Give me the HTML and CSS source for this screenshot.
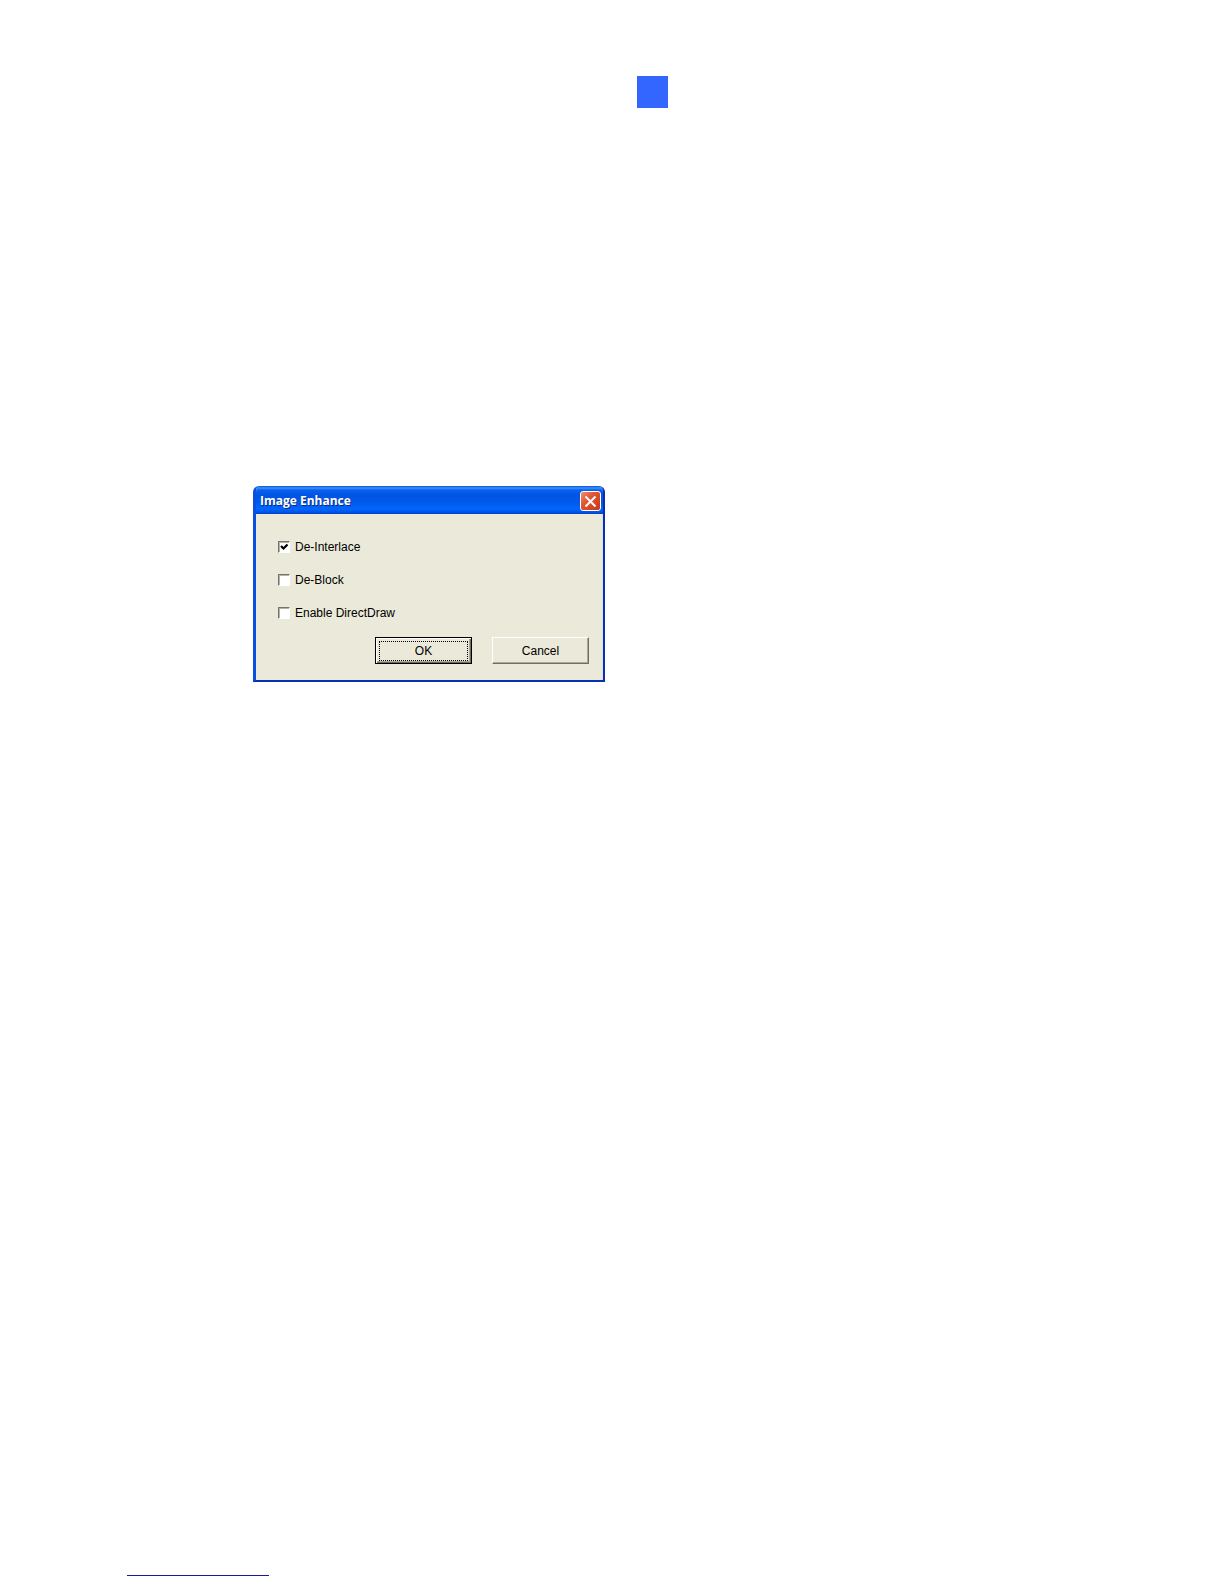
FILE: index.html
```html
<!DOCTYPE html>
<html lang="en">
<head>
<meta charset="utf-8">
<title>Image Enhance</title>
<link rel="stylesheet" href="styles.css">
</head>
<body>
<div class="page">
  <header class="page-header"><span class="page-marker"></span></header>
  <main class="content">
    <form class="dialog" role="dialog" aria-labelledby="dialog-title">
      <div class="title-bar">
        <h1 class="title" id="dialog-title">Image Enhance</h1>
        <button class="close" type="button" aria-label="Close">
          <svg width="13" height="13" viewBox="0 0 13 13" aria-hidden="true"><path d="M1.500 1.500L11.500 11.500M11.500 1.500L1.500 11.500" fill="none" stroke="#fff" stroke-width="2"/></svg>
        </button>
      </div>
      <div class="dialog-body">
        <div class="options">
          <label class="option"><input class="check" type="checkbox" checked>De-Interlace</label>
          <label class="option"><input class="check" type="checkbox">De-Block</label>
          <label class="option"><input class="check" type="checkbox">Enable DirectDraw</label>
        </div>
        <div class="actions">
          <button class="button button-default" type="button"><span class="focus-ring">OK</span></button>
          <button class="button" type="button">Cancel</button>
        </div>
      </div>
    </form>
  </main>
  <footer class="page-footer"><hr class="note-rule"></footer>
</div>
</body>
</html>
```

FILE: styles.css
```css
* {
  box-sizing: border-box;
}

body {
  margin: 0;
  background: #fff;
  color: #000;
  font: 12px/16px "Liberation Sans", Arial, sans-serif;
}

.page {
  display: flex;
  flex-direction: column;
  min-height: 100vh;
  padding: 76px 46px 8px 127px;
}

.page-header {
  display: flex;
  justify-content: center;
}

.page-marker {
  width: 31px;
  height: 32px;
  background: #36f;
}

.content {
  flex: 1;
  padding: 378px 0 0 126px;
}

.dialog {
  width: 352px;
  max-width: 100%;
  border: solid;
  border-width: 0 2px 2px 3px;
  border-color: #0a3cc8 #0830a8 #0830b0 #0a4fe0;
  border-radius: 6px 6px 0 0;
  background: #ebe9d9;
  overflow: hidden;
}

.title-bar {
  display: flex;
  align-items: center;
  justify-content: space-between;
  height: 28px;
  margin: 0 -2px 0 -3px;
  padding: 2px 4px 0 7px;
  background: linear-gradient(#0a50d0 0, #3c94ff 2px, #0a60ee 4px, #0054e3 9px, #0058ea 16px, #0066ff 23px, #005cf0 25px, #0040c8 28px);
}

.title {
  margin: 0;
  color: #fff;
  font: 700 12px/20px "Open Sans", "Noto Sans", sans-serif;
  text-shadow: 1px 1px 0 #0a2c80;
}

.close {
  display: flex;
  align-items: center;
  justify-content: center;
  width: 21px;
  height: 20px;
  padding: 0;
  border: 1px solid #fff;
  border-radius: 3px;
  background: linear-gradient(135deg, #eb9077, #e25430 40%, #c83a14);
}

.dialog-body {
  padding: 25px 13px 16px 22px;
  border-right: 1px solid #d6e2f4;
}

.options {
  display: flex;
  flex-direction: column;
  gap: 17px;
}

.option {
  display: flex;
  align-items: center;
  gap: 5px;
}

.check {
  appearance: none;
  width: 12px;
  height: 12px;
  margin: 0;
  border: 1px solid;
  border-color: #777468 #fff #fff #777468;
  background: #fff;
  box-shadow: inset 1px 1px 0 #b4b2a6;
}

.check:checked {
  background: #fff url("data:image/svg+xml,%3Csvg xmlns='http://www.w3.org/2000/svg' viewBox='0 0 10 10'%3E%3Cpath d='M2 4L4.500 6.500L8.500 2.500' fill='none' stroke='%23000' stroke-width='2.200'/%3E%3C/svg%3E") center / 10px 10px no-repeat;
}

.actions {
  display: flex;
  justify-content: flex-end;
  gap: 20px;
  margin-top: 16px;
}

.button {
  width: 97px;
  height: 27px;
  padding: 0;
  border: 1px solid;
  border-color: #fff #716f64 #716f64 #fff;
  background: #ebe9d9;
  color: #000;
  font: inherit;
  box-shadow: inset -1px -1px 0 #aca899;
}

.button-default {
  padding: 2px;
  border-color: #000;
  box-shadow: inset 1px 1px 0 #fff, inset -1px -1px 0 #716f64, inset -2px -2px 0 #aca899;
}

.focus-ring {
  display: flex;
  align-items: center;
  justify-content: center;
  height: 20px;
  margin: 0 1px;
  border: 1px dotted #000;
}

.note-rule {
  width: 142px;
  height: 1px;
  margin: 0;
  border: 0;
  background: #1a1a9a;
}
```
